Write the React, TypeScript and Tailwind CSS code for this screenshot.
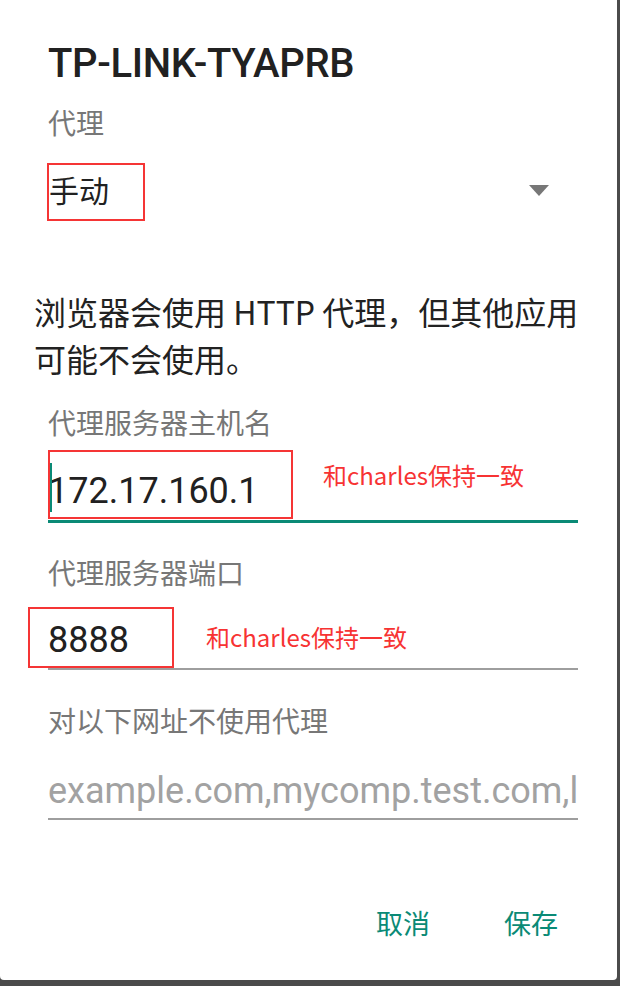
const cjk = { fontFamily: '"Noto Sans CJK SC", "Noto Sans", sans-serif' }
const roboto = { fontFamily: 'Roboto, "Noto Sans CJK SC", sans-serif' }

function Label({ text, className }: { text: string; className: string }) {
  return (
    <div style={cjk} className={`h-[36px] whitespace-nowrap text-[28px] leading-[36px] text-[#777777] ${className}`}>
      {text}
    </div>
  )
}

function RedBox({ className }: { className: string }) {
  return <div className={`pointer-events-none absolute border-2 border-[#f53535] ${className}`} />
}

function Note({ className }: { className: string }) {
  return (
    <div
      style={cjk}
      className={`pointer-events-none absolute whitespace-nowrap text-[24px] leading-[30px] text-[#f73333] ${className}`}
    >
      和charles保持一致
    </div>
  )
}

export default function App() {
  return (
    <div className="h-[986px] w-[620px] overflow-hidden bg-[#4b4b4b]">
      <div className="relative flex h-[980px] w-[617px] flex-col rounded-b-[4px] bg-white pl-[48px] pr-[39px] pt-[40px]">
        <div
          style={roboto}
          className="h-[48px] whitespace-nowrap text-[40px] font-medium leading-[48px] tracking-[-0.35px] text-[#212121]"
        >
          TP-LINK-TYAPRB
        </div>

        <Label text="代理" className="mt-[16px]" />

        <div className="mt-[29px] flex h-[40px] items-center justify-between">
          <span style={cjk} className="pl-[1px] text-[30px] leading-[40px] text-[#212121]">
            手动
          </span>
          <svg width="20" height="11" viewBox="0 0 20 11" className="mr-[29px] mt-[3px]">
            <polygon points="0,0 20,0 10,11" fill="#777777" />
          </svg>
        </div>

        <p style={cjk} className="-ml-[14px] mt-[79px] whitespace-nowrap text-[32px] leading-[47px] text-[#222222]">
          浏览器会使用 HTTP 代理，但其他应用
          <br />
          可能不会使用。
        </p>

        <Label text="代理服务器主机名" className="mt-[22px]" />

        <div className="relative h-[83px] border-b-[3px] border-[#0a8a76] pt-[29px]">
          <div className="absolute left-[2px] top-[23px] h-[49px] w-[2px] bg-[#0a8a76]" />
          <div style={roboto} className="text-[36px] leading-[44px] text-[#212121]">
            172.17.160.1
          </div>
        </div>

        <Label text="代理服务器端口" className="mt-[31px]" />

        <div className="h-[80px] border-b-2 border-[#9e9e9e] pt-[28px]">
          <div style={roboto} className="text-[36px] leading-[44px] text-[#212121]">
            8888
          </div>
        </div>

        <Label text="对以下网址不使用代理" className="mt-[32px]" />

        <div className="h-[82px] overflow-hidden border-b-2 border-[#9e9e9e] pt-[31px]">
          <div style={roboto} className="whitespace-nowrap text-[36px] leading-[44px] text-[#a2a2a2]">
            example.com,mycomp.test.com,localhost
          </div>
        </div>

        <div style={cjk} className="mt-[85px] flex justify-end gap-[74px] pr-[20px] text-[27px] leading-[36px] text-[#0a8a76]">
          <span>取消</span>
          <span>保存</span>
        </div>

        <RedBox className="left-[47px] top-[163px] h-[58px] w-[98px]" />
        <RedBox className="left-[48px] top-[450px] h-[69px] w-[245px]" />
        <RedBox className="left-[28px] top-[607px] h-[61px] w-[146px]" />
        <Note className="left-[323px] top-[460px]" />
        <Note className="left-[206px] top-[622px]" />
      </div>
    </div>
  )
}
